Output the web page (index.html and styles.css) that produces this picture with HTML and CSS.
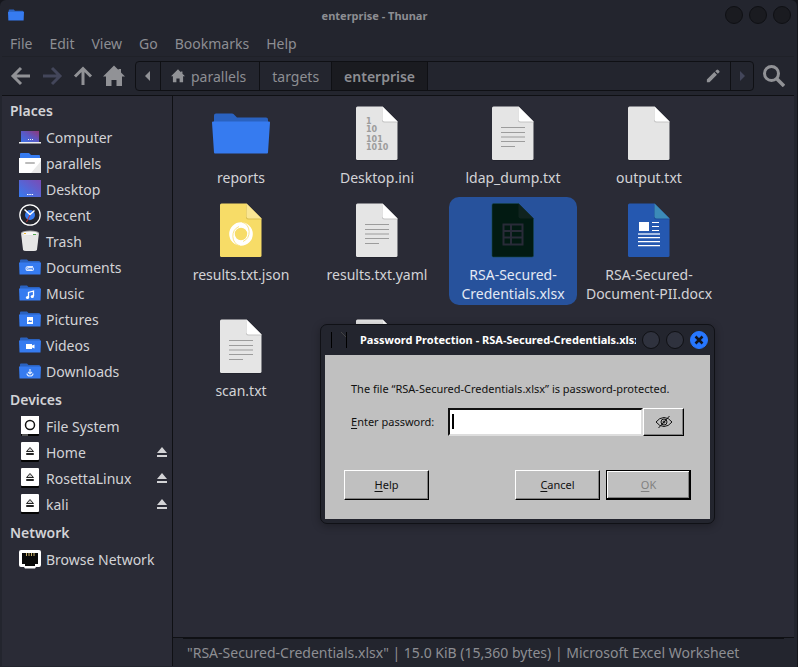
FILE: index.html
```html
<!DOCTYPE html>
<html lang="en">
<head>
    <meta charset="UTF-8">
    <meta name="viewport" content="width=device-width, initial-scale=1.0">
    <title>enterprise - Thunar</title>
    <link rel="stylesheet" href="styles.css">
</head>
<body>

    <!-- Shared icons -->
    <svg class="defs" width="0" height="0" aria-hidden="true">
        <defs>
            <linearGradient id="screen" x1="0" y1="1" x2="1" y2="0">
                <stop offset="0" stop-color="#3b72e8"/>
                <stop offset="0.5" stop-color="#5a58c4"/>
                <stop offset="1" stop-color="#903878"/>
            </linearGradient>
            <linearGradient id="wallpaper" x1="0" y1="1" x2="1" y2="0">
                <stop offset="0" stop-color="#367bf0"/>
                <stop offset="1" stop-color="#7b4bb5"/>
            </linearGradient>
        </defs>
        <symbol id="doc" viewBox="0 0 64 64">
            <path fill="#1f2029" d="M12 5h26l15 15v37a2 2 0 0 1-2 2H13a2 2 0 0 1-2-2z" opacity=".6"/>
            <path fill="#e5e5e5" d="M12.500 4.500h25l15 15V56.500a1.500 1.500 0 0 1-1.500 1.500H12.500a1.500 1.500 0 0 1-1.500-1.500V6a1.500 1.500 0 0 1 1.500-1.500z"/>
            <path fill="#c4c4c4" d="M37 5v13.500a2 2 0 0 0 2 2h13.500z"/>
            <path fill="#fff" d="M37.500 4.500l15 15H39.500a2 2 0 0 1-2-2z"/>
        </symbol>
        <symbol id="doc-text" viewBox="0 0 64 64">
            <use href="#doc"/>
            <path stroke="#9c9c9c" stroke-width="1.200" d="M20 25.500h24M20 30.500h24M20 35h24M20 39.500h24M20 44.500h14"/>
        </symbol>
        <symbol id="folder" viewBox="0 0 22 22">
            <path fill="#2a62c0" d="M1 4.500a1 1 0 0 1 1-1h6l1.500 1.500H20a1 1 0 0 1 1 1V10H1z"/>
            <path fill="#367bf0" d="M0 6.500h22l-.5 12H.5z"/>
        </symbol>
        <symbol id="drive" viewBox="0 0 22 22">
            <rect x="2" y="1" width="18" height="20" rx="1" fill="#050505"/>
            <rect x="2" y="1" width="18" height="18" rx="1" fill="#fff"/>
            <path fill="#ccc" stroke="#222" stroke-width="1" d="M11 6.500l3.500 4h-7zM7.500 12.500h7v1h-7z"/>
        </symbol>
        <symbol id="eject" viewBox="0 0 12 12">
            <path fill="#d3d3d6" d="M6 1l5 6H1zM1 9h10v2H1z"/>
        </symbol>
        <symbol id="house" viewBox="0 0 22 22">
            <path fill="currentColor" d="M11 0.500L0 11.500h3V21h5.500v-6h5v6H19v-9.500h3l-4-4V4h-2.500v1z"/>
        </symbol>
    </svg>

    <div class="window">
        <header class="titlebar">
            <svg class="title-icon" viewBox="0 0 22 22"><use href="#folder"/></svg>
            <h1 class="title">enterprise - Thunar</h1>
            <div class="win-buttons">
                <button class="win-btn" aria-label="Minimize"></button>
                <button class="win-btn" aria-label="Maximize"></button>
                <button class="win-btn" aria-label="Close"></button>
            </div>
        </header>

        <nav class="menubar">
            <a href="#">File</a>
            <a href="#">Edit</a>
            <a href="#">View</a>
            <a href="#">Go</a>
            <a href="#">Bookmarks</a>
            <a href="#">Help</a>
        </nav>

        <div class="toolbar">
            <div class="tools">
                <button class="tool" aria-label="Back">
                    <svg viewBox="0 0 22 22"><path fill="none" stroke="currentColor" stroke-width="3" d="M20 11H4M11 3l-8 8 8 8"/></svg>
                </button>
                <button class="tool disabled" aria-label="Forward" disabled>
                    <svg viewBox="0 0 22 22"><path fill="none" stroke="currentColor" stroke-width="3" d="M2 11h16M11 3l8 8-8 8"/></svg>
                </button>
                <button class="tool" aria-label="Up">
                    <svg viewBox="0 0 22 22"><path fill="none" stroke="currentColor" stroke-width="3" d="M11 20V4M3 11.500l8-8 8 8"/></svg>
                </button>
                <button class="tool" aria-label="Home">
                    <svg viewBox="0 0 22 22"><use href="#house"/></svg>
                </button>
            </div>
            <div class="pathbar">
                <button class="crumb arrow" aria-label="Scroll left">
                    <svg viewBox="0 0 6 10"><path fill="currentColor" d="M5 0v10L0 5z"/></svg>
                </button>
                <button class="crumb with-icon">
                    <svg viewBox="0 0 22 22"><use href="#house"/></svg>parallels
                </button>
                <button class="crumb">targets</button>
                <button class="crumb current">enterprise</button>
                <button class="crumb edit" aria-label="Edit location">
                    <svg viewBox="0 0 16 16"><path fill="currentColor" d="M1 12l8.500-8.500 3 3L4 15H1zM10.500 2.500L12 1a1.400 1.400 0 0 1 2 0l1 1a1.400 1.400 0 0 1 0 2l-1.500 1.500z"/></svg>
                </button>
                <button class="crumb next" aria-label="Scroll right" disabled>
                    <svg viewBox="0 0 6 10"><path fill="currentColor" d="M1 0v10l5-5z"/></svg>
                </button>
            </div>
            <button class="tool search" aria-label="Search">
                <svg viewBox="0 0 22 22"><circle cx="8.500" cy="8.500" r="7" fill="none" stroke="currentColor" stroke-width="3"/><path stroke="currentColor" stroke-width="3.500" d="M13.500 13.500l7.500 7.500"/></svg>
            </button>
        </div>

        <div class="content">
            <aside class="sidebar">
                <h2>Places</h2>
                <ul>
                    <li><a href="#">
                        <svg viewBox="0 0 22 22"><path fill="url(#screen)" d="M2 5h18v11H2z"/><path fill="#eee" d="M9 13h1v1H9zM11 13h1v1h-1zM13 13h1v1h-1zM0 16h22v1.500H0z"/></svg>
                        <span>Computer</span></a></li>
                    <li><a href="#">
                        <svg viewBox="0 0 22 22"><path fill="#367bf0" d="M1 2a1 1 0 0 1 1-1h8l2 2h8a1 1 0 0 1 1 1v4H1z"/><path fill="#fff" d="M0 6h22v15H0z"/><path fill="#e9e9e9" d="M22 9v12H12z"/><rect x="6" y="10" width="10" height="2" rx="1" fill="#bbb"/></svg>
                        <span>parallels</span></a></li>
                    <li><a href="#">
                        <svg viewBox="0 0 22 22"><path fill="url(#wallpaper)" d="M0 2h22v17H0z"/><path fill="#fff" d="M8 16h1.500v1H8zM10.300 16h1.500v1h-1.500zM12.600 16h1.500v1h-1.500z"/></svg>
                        <span>Desktop</span></a></li>
                    <li><a href="#">
                        <svg viewBox="0 0 22 22"><circle cx="11" cy="11" r="10.200" fill="#22242d" stroke="#fff" stroke-width="1.200"/><circle cx="11" cy="11" r="5" fill="#367bf0"/><path fill="none" stroke="#fff" stroke-width="1.500" d="M5.500 5.500l5.500 5 4.500-4"/><path stroke="#c03030" d="M11 11l-3.500 7"/></svg>
                        <span>Recent</span></a></li>
                    <li><a href="#">
                        <svg viewBox="0 0 22 22"><path fill="#e6e6e6" d="M2 3h18l-2 16.500Q17.800 21 15 21H7Q4.200 21 4 19.500z"/><ellipse cx="11" cy="3" rx="9" ry="2.500" fill="#aaa"/><ellipse cx="11" cy="3.500" rx="8" ry="2" fill="#f5f5f5"/><path fill="#eab530" d="M5 3h2v1H5z"/><path fill="#50a850" d="M14 4h3v1h-3z"/></svg>
                        <span>Trash</span></a></li>
                    <li><a href="#">
                        <svg viewBox="0 0 22 22"><use href="#folder"/><path fill="none" stroke="#dce8ff" stroke-width="1.100" d="M14 10.500H9a2 2 0 0 0 0 4h4a1.500 1.500 0 0 0 0-3H9.500a.8.800 0 0 0 0 1.700H13"/></svg>
                        <span>Documents</span></a></li>
                    <li><a href="#">
                        <svg viewBox="0 0 22 22"><use href="#folder"/><path fill="none" stroke="#fff" stroke-width="1.300" d="M9.500 15.500v-5l5-1.500v5"/><circle cx="8.500" cy="15.500" r="1.600" fill="#fff"/><circle cx="13.300" cy="14.500" r="1.600" fill="#fff"/></svg>
                        <span>Music</span></a></li>
                    <li><a href="#">
                        <svg viewBox="0 0 22 22"><use href="#folder"/><path fill="#fff" d="M8 9h6v7H8z"/><path fill="#367bf0" d="M9 14l1.500-2 1 1 .8-.8L13 14z"/></svg>
                        <span>Pictures</span></a></li>
                    <li><a href="#">
                        <svg viewBox="0 0 22 22"><use href="#folder"/><path fill="#fff" d="M7 10h6v1.500l2.500-1v4l-2.500-1V15H7z"/></svg>
                        <span>Videos</span></a></li>
                    <li><a href="#">
                        <svg viewBox="0 0 22 22"><use href="#folder"/><path fill="none" stroke="#dce8ff" stroke-width="1.200" d="M11 9v5M9 12l2 2 2-2M8 13.500q0 2.500 3 2.500t3-2.500"/></svg>
                        <span>Downloads</span></a></li>
                </ul>
                <h2>Devices</h2>
                <ul>
                    <li><a href="#">
                        <svg viewBox="0 0 22 22"><rect x="2" y="1" width="18" height="20" rx="1" fill="#050505"/><path fill="#fff" d="M2 1h18v18H2z"/><path fill="#aaa" d="M3 19.500h6v1H3z"/><circle cx="11" cy="10" r="4.500" fill="#fff" stroke="#111" stroke-width="1.500"/></svg>
                        <span>File System</span></a></li>
                    <li><a href="#"><svg viewBox="0 0 22 22"><use href="#drive"/></svg><span>Home</span></a>
                        <button class="eject" aria-label="Eject Home"><svg viewBox="0 0 12 12"><use href="#eject"/></svg></button></li>
                    <li><a href="#"><svg viewBox="0 0 22 22"><use href="#drive"/></svg><span>RosettaLinux</span></a>
                        <button class="eject" aria-label="Eject RosettaLinux"><svg viewBox="0 0 12 12"><use href="#eject"/></svg></button></li>
                    <li><a href="#"><svg viewBox="0 0 22 22"><use href="#drive"/></svg><span>kali</span></a>
                        <button class="eject" aria-label="Eject kali"><svg viewBox="0 0 12 12"><use href="#eject"/></svg></button></li>
                </ul>
                <h2>Network</h2>
                <ul>
                    <li><a href="#">
                        <svg viewBox="0 0 22 22"><path fill="#fff" d="M2 2h18a2 2 0 0 1 2 2v13a2 2 0 0 1-2 2h-3l-1 1.500H6L5 19H2a2 2 0 0 1-2-2V4a2 2 0 0 1 2-2z"/><path fill="#0a0a0a" d="M3 5h16v11h-3v2H6v-2H3z"/><path stroke="#c9b26a" d="M7.500 5v3M10 5v3M12.500 5v3M15 5v3"/></svg>
                        <span>Browse Network</span></a></li>
                </ul>
            </aside>

            <main class="main">
                <div class="files">
                    <a class="file" href="#">
                        <svg viewBox="0 0 64 64"><path fill="#2a62c0" d="M5 13.500a2 2 0 0 1 2-2h16a2 2 0 0 1 1.500.6L28 15.500h29a2 2 0 0 1 2 2V26H5z"/><path fill="#367bf0" d="M4 19.500h56a1 1 0 0 1 1 1L59 50.500a1 1 0 0 1-1 1H6a1 1 0 0 1-1-1L3 20.500a1 1 0 0 1 1-1z"/></svg>
                        <span>reports</span>
                    </a>
                    <a class="file" href="#">
                        <svg viewBox="0 0 64 64"><use href="#doc"/><g class="bits"><text x="21" y="22">1</text><text x="21" y="30">10</text><text x="21" y="39.500">101</text><text x="21" y="48">1010</text></g></svg>
                        <span>Desktop.ini</span>
                    </a>
                    <a class="file" href="#">
                        <svg viewBox="0 0 64 64"><use href="#doc-text"/></svg>
                        <span>ldap_dump.txt</span>
                    </a>
                    <a class="file" href="#">
                        <svg viewBox="0 0 64 64"><use href="#doc"/></svg>
                        <span>output.txt</span>
                    </a>
                    <a class="file" href="#">
                        <svg viewBox="0 0 64 64"><path fill="#f7dc67" d="M12.500 4.500h25l15 15V56.500a1.500 1.500 0 0 1-1.500 1.500H12.500a1.500 1.500 0 0 1-1.500-1.500V6a1.500 1.500 0 0 1 1.500-1.500z"/><path fill="#d9bf50" d="M37 5v13.500a2 2 0 0 0 2 2h13.500z"/><path fill="#f9e694" d="M37.500 4.500l15 15h-13a2 2 0 0 1-2-2z"/>
                            <circle cx="32" cy="35" r="9" fill="none" stroke="#fff" stroke-width="5.600"/>
                            <g fill="none" stroke="#f7dc67" stroke-width=".8">
                                <path d="M33 23A10.500 10.500 0 0 1 34 42.500"/>
                                <path d="M31 47A10.500 10.500 0 0 1 30 27.500"/>
                            </g></svg>
                        <span>results.txt.json</span>
                    </a>
                    <a class="file" href="#">
                        <svg viewBox="0 0 64 64"><use href="#doc-text"/></svg>
                        <span>results.txt.yaml</span>
                    </a>
                    <a class="file selected" href="#">
                        <svg viewBox="0 0 64 64"><path fill="#021a12" stroke="#15464f" stroke-width=".6" d="M12.500 4.500h25l15 15V56.500a1.500 1.500 0 0 1-1.500 1.500H12.500a1.500 1.500 0 0 1-1.500-1.500V6a1.500 1.500 0 0 1 1.500-1.500z"/><path fill="#10231f" d="M37.500 4.500l15 15h-13a2 2 0 0 1-2-2z"/><path fill="none" stroke="#292b38" stroke-width="2" d="M22.500 25.500h19v20h-19zM30 25v20M22 32h20M22 38.500h20"/></svg>
                        <span>RSA-Secured-<br>Credentials.xlsx</span>
                    </a>
                    <a class="file" href="#">
                        <svg viewBox="0 0 64 64"><path fill="#2558b0" d="M12.500 4.500h25l15 15V56.500a1.500 1.500 0 0 1-1.500 1.500H12.500a1.500 1.500 0 0 1-1.500-1.500V6a1.500 1.500 0 0 1 1.500-1.500z"/><path fill="#1f4c99" d="M37 5v13.500a2 2 0 0 0 2 2h13.500z"/><path fill="#3c8bb8" d="M37.500 4.500l15 15h-13a2 2 0 0 1-2-2z"/><path fill="#fff" d="M22 23h10v9H22zM35 23h7v1h-7zM35 27h7v1h-7zM35 31h7v1h-7zM21 38h22v1.200H21zM21 42h22v1.200H21zM21 46h22v1.200H21z"/><path fill="#a9c0e6" d="M21 34h22v2H21z"/></svg>
                        <span>RSA-Secured-<br>Document-PII.docx</span>
                    </a>
                    <a class="file" href="#">
                        <svg viewBox="0 0 64 64"><use href="#doc-text"/></svg>
                        <span>scan.txt</span>
                    </a>
                    <a class="file" href="#" aria-label="Document">
                        <svg viewBox="0 0 64 64"><use href="#doc-text"/></svg>
                    </a>
                </div>
                <footer class="statusbar">
                    <p>"RSA-Secured-Credentials.xlsx" | 15.0 KiB (15,360 bytes) | Microsoft Excel Worksheet</p>
                </footer>
            </main>
        </div>
    </div>

    <!-- Password dialog, floats over the file manager -->
    <form class="dialog" role="dialog" aria-labelledby="dialog-title">
        <header class="dialog-bar">
            <svg class="dialog-icon" viewBox="0 0 16 16"><path stroke="#000" d="M.5 0v16M15.500 0v16"/><path stroke="#444" d="M10 0l5 5"/></svg>
            <h2 class="dialog-title" id="dialog-title">Password Protection - RSA-Secured-Credentials.xlsx</h2>
            <div class="win-buttons">
                <button type="button" class="win-btn light" aria-label="Minimize"></button>
                <button type="button" class="win-btn light" aria-label="Maximize"></button>
                <button type="button" class="win-btn close" aria-label="Close">
                    <svg viewBox="0 0 16 16"><path stroke="#10131c" stroke-width="2.500" d="M4.500 4.500l7 7M11.500 4.500l-7 7"/></svg>
                </button>
            </div>
        </header>
        <div class="dialog-body">
            <p>The file “RSA-Secured-Credentials.xlsx” is password-protected.</p>
            <div class="password-row">
                <label for="password"><u>E</u>nter password:</label>
                <div class="password-box">
                    <input type="password" id="password" autofocus>
                </div>
                <button type="button" class="btn eye" aria-label="Show password">
                    <svg viewBox="0 0 18 14"><g fill="none" stroke="#111"><path d="M1 7q3.500-4.500 8-4.500T17 7q-3.500 4.500-8 4.500T1 7z"/><circle cx="9" cy="7" r="3"/><circle cx="9" cy="7" r="1"/><path d="M3.500 13L14.500 1"/></g></svg>
                </button>
            </div>
            <div class="actions">
                <button type="button" class="btn"><u>H</u>elp</button>
                <span class="spacer"></span>
                <button type="button" class="btn"><u>C</u>ancel</button>
                <button type="submit" class="btn default" disabled><u>O</u>K</button>
            </div>
        </div>
    </form>

</body>
</html>
```
FILE: styles.css
```css
* {
    box-sizing: border-box;
}

body {
    margin: 0;
    background-color: #15161c;
    color: #d3d3d6;
    font-family: "Noto Sans", "Open Sans", sans-serif;
    font-size: 14px;
    line-height: 19px;
}

a {
    color: inherit;
    text-decoration: none;
}

button {
    margin: 0;
    padding: 0;
    border: none;
    background: none;
    color: inherit;
    font: inherit;
}

ul {
    list-style: none;
    margin: 0;
    padding: 0;
}

svg {
    display: block;
    flex: none;
}

.defs {
    position: absolute;
}

.window {
    display: flex;
    flex-direction: column;
    min-height: 100vh;
    margin-right: 1px;
    padding: 0 3px 1px 2px;
    background-color: #23252e;
    border-radius: 6px 6px 0 0;
}

/* Title bar */
.titlebar {
    display: flex;
    align-items: center;
    height: 30px;
    padding: 0 3px 0 6px;
}

.title-icon {
    width: 16px;
    height: 16px;
}

.title {
    flex: 1;
    margin: 0;
    color: #8d8e93;
    font-size: 11px;
    font-weight: bold;
    text-align: center;
}

.win-buttons {
    display: flex;
    gap: 6px;
}

.win-btn {
    width: 18px;
    height: 18px;
    border: 1px solid #0f1014;
    border-radius: 50%;
    background-color: #1a1b20;
}

.win-btn.light {
    background-color: #2f323e;
}

.win-btn.close {
    border-color: #2777ff;
    background-color: #2777ff;
}

.win-btn.close svg {
    width: 16px;
    height: 16px;
}

/* Menu */
.menubar {
    display: flex;
    gap: 17px;
    height: 27px;
    padding: 4px 8px;
    border-bottom: 1px solid #1f2128;
    color: #8d8e93;
}

/* Toolbar */
.toolbar {
    display: flex;
    align-items: center;
    gap: 9px;
    height: 39px;
    padding: 0 9px 0 8px;
    border-bottom: 1px solid #0f1014;
    color: #919296;
}

.tools {
    display: flex;
    gap: 9px;
    padding-right: 1px;
}

.tool svg {
    width: 22px;
    height: 22px;
}

.tool.disabled {
    color: #43465a;
}

.pathbar {
    display: flex;
    flex: 1;
    height: 30px;
    border: 1px solid #0f1014;
    border-radius: 4px;
    overflow: hidden;
}

.crumb {
    display: flex;
    align-items: center;
    gap: 6px;
    padding: 0 12px;
    border-right: 1px solid #0f1014;
    color: #8d8e93;
}

.crumb svg {
    width: 14px;
    height: 14px;
    color: #919296;
}

.crumb.arrow svg,
.crumb.next svg {
    width: 6px;
    height: 10px;
}

.crumb.arrow {
    padding: 0 9px;
}

.crumb.with-icon {
    padding: 0 13px 0 10px;
}

.crumb.current {
    background-color: #1a1b20;
    font-weight: 600;
}

.crumb.edit {
    flex: 1;
    justify-content: flex-end;
    padding: 0 10px;
}

.crumb.next {
    padding: 0 8px;
    border-right: none;
}

.crumb.next svg {
    color: #43465a;
}

/* Sidebar */
.content {
    display: flex;
    flex: 1;
    background-color: #2a2b36;
}

.sidebar {
    width: 171px;
    border-right: 1px solid #0f1014;
}

.sidebar h2 {
    margin: 0;
    padding: 2px 8px 0;
    font-size: 14px;
    font-weight: 600;
    line-height: 26px;
}

.sidebar ul + h2 {
    padding-top: 3px;
}

.sidebar li {
    display: flex;
    align-items: center;
    height: 26px;
    padding: 0 4px 0 17px;
}

.sidebar li a {
    display: flex;
    align-items: center;
    flex: 1;
    gap: 5px;
}

.sidebar li a svg {
    width: 22px;
    height: 22px;
}

.eject svg {
    width: 12px;
    height: 12px;
}

/* Files */
.main {
    display: flex;
    flex: 1;
    flex-direction: column;
}

.files {
    display: grid;
    grid-template-columns: repeat(auto-fill, 128px);
    align-content: start;
    flex: 1;
    gap: 8px;
    padding: 4px;
}

.file {
    display: flex;
    flex-direction: column;
    align-items: center;
    gap: 2px;
    padding: 2px 0;
    border-radius: 10px;
    text-align: center;
    white-space: nowrap;
}

.file svg {
    width: 64px;
    height: 64px;
}

.file.selected {
    background-color: #27529c;
    color: #e4e9f4;
}

.bits {
    fill: #9c9c9c;
    font-family: "DejaVu Sans", sans-serif;
    font-size: 8px;
    font-weight: bold;
}

.statusbar {
    padding: 0 10px;
    border-top: 1px solid #0f1014;
    background-color: #23252e;
    color: #8d8e93;
}

.statusbar p {
    margin: 0;
    padding: 4px;
    border-top: 1px solid #0f1014;
}

/* Dialog */
.dialog {
    position: absolute;
    top: 324px;
    left: 320px;
    width: 395px;
    padding: 0 4px 4px;
    border: 1px solid #101116;
    border-radius: 7px;
    background-color: #23252e;
    box-shadow: 0 2px 8px rgba(0, 0, 0, 0.3);
    color: #111;
    font-size: 11px;
    line-height: 16px;
}

.dialog-bar {
    display: flex;
    align-items: center;
    height: 30px;
    padding: 0 2px 0 6px;
}

.dialog-icon {
    width: 16px;
    height: 16px;
}

.dialog-title {
    flex: 1;
    margin: 0 6px 0 13px;
    overflow: hidden;
    color: #fff;
    font-size: 11px;
    font-weight: bold;
    white-space: nowrap;
}

.dialog-body {
    padding: 26px 19px 19px;
    background-color: #c0c0c0;
}

.dialog-body p {
    margin: 0 7px 11px;
}

.password-row {
    display: flex;
    align-items: center;
    margin: 0 7px;
}

.password-row label {
    width: 97px;
}

.password-box {
    position: relative;
    flex: 1;
}

/* text cursor */
.password-box::before {
    content: "";
    position: absolute;
    top: 6px;
    left: 4px;
    width: 2px;
    height: 15px;
    background-color: #000;
}

.password-box input {
    display: block;
    width: 100%;
    height: 28px;
    padding: 0 3px;
    border: 2px solid;
    border-color: #111 #ddd #ddd #111;
    border-radius: 0;
    outline: none;
    background-color: #fff;
    caret-color: transparent;
    font: inherit;
}

.btn {
    width: 85px;
    height: 30px;
    border: 1px solid;
    border-color: #fff #000 #000 #fff;
    background-color: #c0c0c0;
    box-shadow: inset -1px -1px #808080;
}

.btn.eye {
    display: flex;
    align-items: center;
    justify-content: center;
    width: 41px;
    height: 28px;
}

.eye svg {
    width: 18px;
    height: 14px;
}

.actions {
    display: flex;
    gap: 6px;
    margin-top: 34px;
}

.spacer {
    flex: 1;
}

.btn.default {
    border: 1px solid #000;
    box-shadow: inset -1px -1px #000, inset 1px 1px #fff, inset -2px -2px #808080;
    color: #808080;
}

u {
    text-underline-offset: 2px;
}
```
